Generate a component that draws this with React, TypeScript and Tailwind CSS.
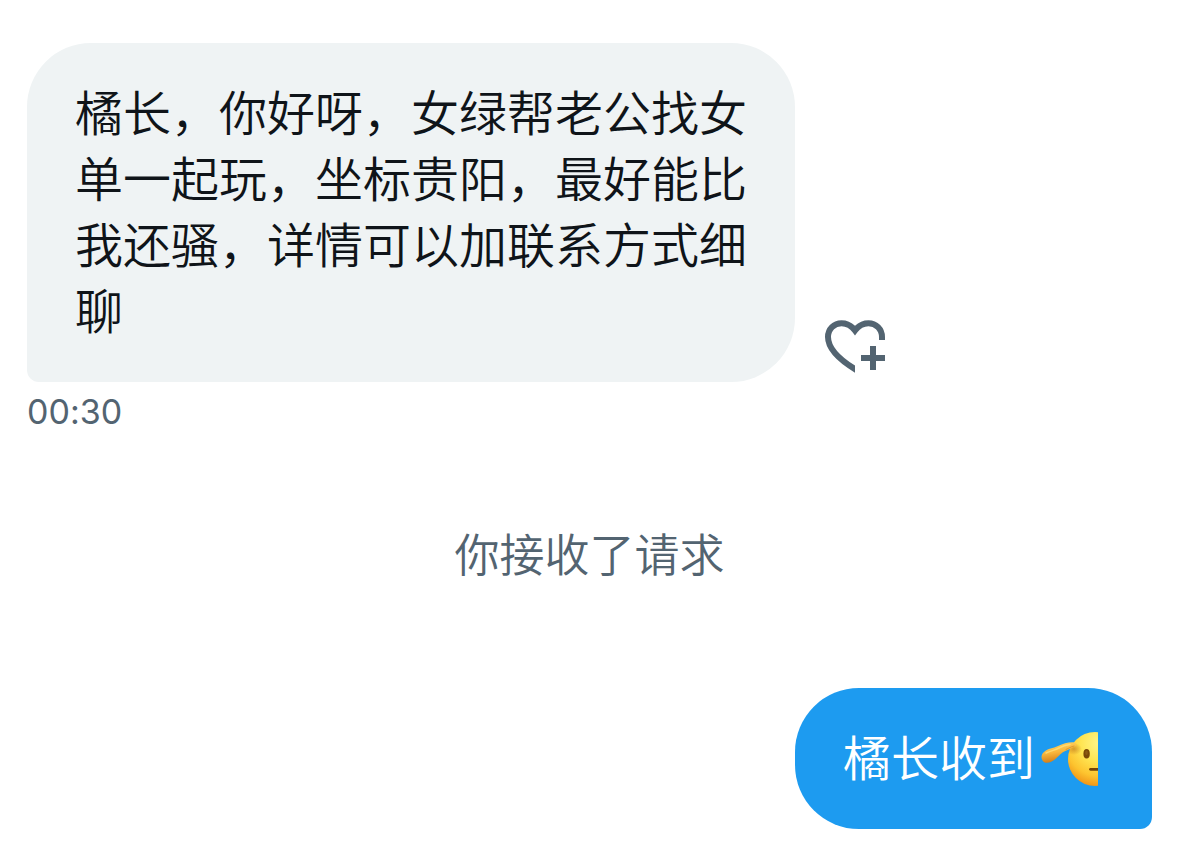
import type { ReactNode } from "react";

function HeartPlusIcon() {
  return (
    <svg viewBox="0 0 60 54" className="h-[54px] w-[60px]" fill="none" stroke="currentColor" strokeWidth="6" aria-hidden="true">
      <defs>
        <clipPath id="heart-left">
          <rect x="0" y="0" width="30" height="54" />
        </clipPath>
        <clipPath id="heart-right">
          <rect x="30" y="0" width="30" height="54" />
        </clipPath>
      </defs>
      <path clipPath="url(#heart-left)" d="M34 51.5C14 40 3 28.5 3 17C3 9 9 3.2 16.5 3.2C22 3.2 26.8 6 30 10.5L34 16" />
      <path clipPath="url(#heart-right)" d="M26 16L30 10.5C33.2 6 38 3.2 43.5 3.2C51 3.2 57 9 57 17V20" />
      <path d="M48 26V50M36 38H60" />
    </svg>
  );
}

function SaluteEmoji() {
  return (
    <svg viewBox="0 0 57 56" className="mx-1.5 h-14 w-[57px] shrink-0" role="img" aria-label="敬礼">
      <defs>
        <radialGradient id="face" gradientUnits="userSpaceOnUse" cx="58" cy="12" r="46">
          <stop offset="0" stopColor="#fff68a" />
          <stop offset="0.4" stopColor="#ffe552" />
          <stop offset="0.72" stopColor="#fdc42f" />
          <stop offset="1" stopColor="#ec8a14" />
        </radialGradient>
        <linearGradient id="hand" x1="0" y1="0" x2="0.25" y2="1">
          <stop offset="0" stopColor="#ffd968" />
          <stop offset="0.55" stopColor="#f8b63c" />
          <stop offset="1" stopColor="#d27c18" />
        </linearGradient>
        <radialGradient id="shade">
          <stop offset="0" stopColor="#b66a1b" stopOpacity="0.55" />
          <stop offset="1" stopColor="#b66a1b" stopOpacity="0" />
        </radialGradient>
        <clipPath id="face-shape">
          <circle cx="54" cy="28" r="27" />
        </clipPath>
      </defs>
      <circle cx="54" cy="28" r="27" fill="url(#face)" />
      <ellipse cx="33" cy="18" rx="8" ry="6" fill="url(#shade)" clipPath="url(#face-shape)" />
      <path
        d="M3 21C7 17 12 17.5 17 15C22 12.5 26 11.5 32 11.2C35.5 11.2 36.5 14 34 15.2C31 16 29.5 18 25.5 19.5C20.5 21.5 19.5 23.5 15.5 27C10.5 32 4 33.5 1.5 29.5C-.3 26.5 .5 23 3 21Z"
        fill="url(#hand)"
      />
      <path d="M5 22C10 19.5 14 19.5 18 17C22 14.8 25 14 29 13.5" fill="none" stroke="#ffdf79" strokeWidth="1.5" strokeLinecap="round" opacity="0.8" />
      <path d="M25 18.5C28 17.2 30 15.6 33 15" fill="none" stroke="#bf741c" strokeWidth="1" strokeLinecap="round" opacity="0.5" />
      <ellipse cx="45.6" cy="22.8" rx="3.2" ry="4.8" fill="#7b4807" />
      <ellipse cx="45.5" cy="21.8" rx="1.3" ry="2.2" fill="#8d5a14" />
      <path d="M49.5 38.3H57" stroke="#754306" strokeWidth="2.8" strokeLinecap="round" />
    </svg>
  );
}

function Bubble({ outgoing = false, children }: { outgoing?: boolean; children: ReactNode }) {
  const tone = outgoing
    ? "rounded-br-xl bg-[#1d9bf0] text-white"
    : "rounded-bl-xl bg-[#eff3f4] text-[#0f1419]";
  return (
    <div className={`flex max-w-3xl items-center rounded-[64px] px-12 pt-[38px] pb-[37px] text-5xl leading-[66px] ${tone}`}>
      {children}
    </div>
  );
}

export default function App() {
  return (
    <main className="flex min-h-screen flex-col bg-white pt-[43px] pr-[26px] pb-3 pl-[27px] font-['Inter','Noto_Sans_CJK_SC',sans-serif] font-[350]">
      <article>
        <div className="flex items-end gap-[30px]">
          <Bubble>
            <p lang="zh-CN">橘长，你好呀，女绿帮老公找女单一起玩，坐标贵阳，最好能比我还骚，详情可以加联系方式细聊</p>
          </Bubble>
          <button type="button" aria-label="添加心情" className="mb-2 shrink-0 text-[#536471]">
            <HeartPlusIcon />
          </button>
        </div>
        <time className="mt-2 block text-[34px] leading-[44px] font-normal text-[#536471] [font-feature-settings:'calt'_0]">00:30</time>
      </article>
      <p lang="zh-CN" className="mt-[92px] text-center text-[45px] leading-[60px] text-[#536471]">你接收了请求</p>
      <article className="mt-[102px] flex justify-end">
        <Bubble outgoing>
          <p lang="zh-CN">橘长收到</p>
          <SaluteEmoji />
        </Bubble>
      </article>
    </main>
  );
}
